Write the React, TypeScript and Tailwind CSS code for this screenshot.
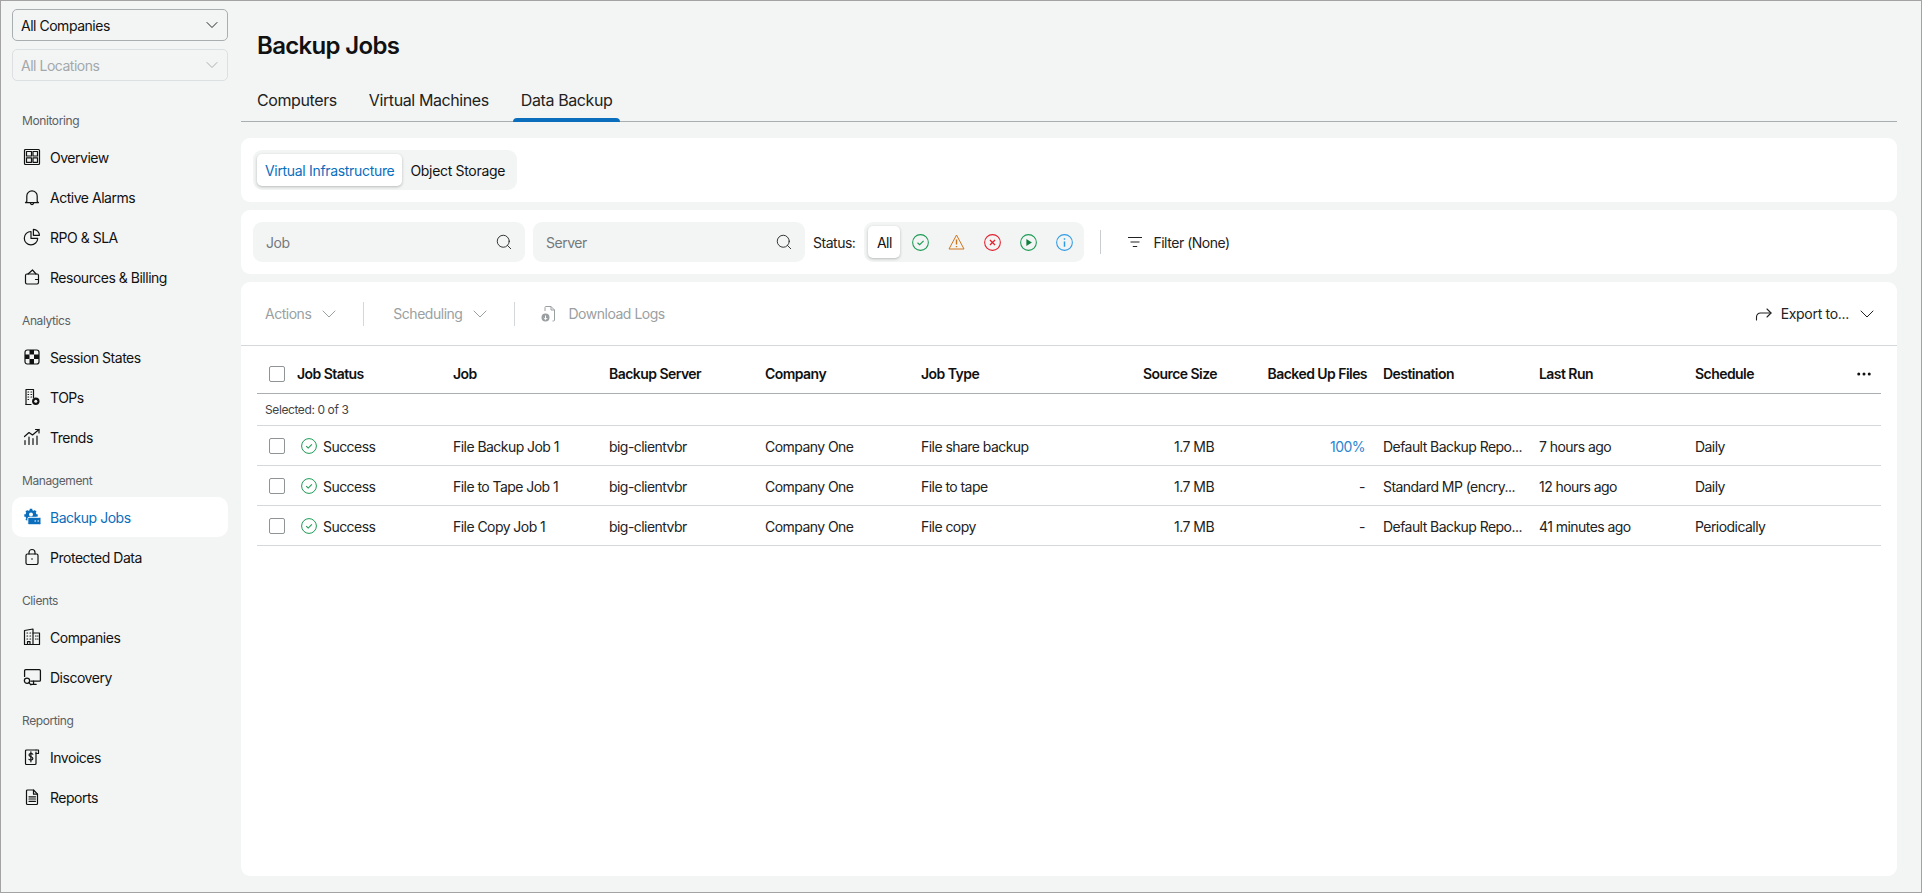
import { ChevronDown, Search, Ellipsis } from "lucide-react";
import type { ReactNode } from "react";

// shared props for the hand drawn line icons
const line = { fill: "none", stroke: "currentColor", strokeWidth: 1.2, strokeLinecap: "round", strokeLinejoin: "round" } as const;

function Icon({ children, size = 18, className = "" }: { children: ReactNode; size?: number; className?: string }) {
  return (
    <svg width={size} height={size} viewBox="0 0 18 18" className={"shrink-0 " + className} {...line}>
      {children}
    </svg>
  );
}

const icons: Record<string, ReactNode> = {
  overview: (
    <Icon>
      <rect x="1.500" y="1.500" width="15" height="15" rx="1" />
      <rect x="3.500" y="3.500" width="5" height="4.500" />
      <rect x="10" y="3.500" width="4.500" height="4.500" />
      <rect x="3.500" y="9.800" width="5" height="4.500" />
      <rect x="10" y="9.800" width="4.500" height="4.500" />
    </Icon>
  ),
  bell: (
    <Icon>
      <path d="M3.800 13.500V8a5.200 5.200 0 0 1 10.400 0v5.500l1.300 1.200h-13z" />
      <path d="M7.500 15.500a1.600 1.600 0 0 0 3 0" />
    </Icon>
  ),
  pie: (
    <Icon>
      <path d="M8 3.500a6.700 6.700 0 1 0 6.700 6.900H8z" />
      <path d="M10.400 1.300a6 6 0 0 1 6 6h-6z" />
    </Icon>
  ),
  wallet: (
    <Icon>
      <rect x="2.500" y="6" width="13" height="10" rx="1.400" />
      <path d="M5 6l4.500-4 3.500 4" />
      <path d="M15.500 11.500h-3" />
    </Icon>
  ),
  session: (
    <Icon>
      <rect x="2" y="2" width="14" height="14" rx="2.200" />
      <path d="M6.500 2H11v4.500H6.500zM2 6.500h4.500V11H2zM11 6.500h5V11h-5zM6.500 11H11v5H6.500z" fill="currentColor" stroke="none" />
    </Icon>
  ),
  tops: (
    <Icon>
      <path d="M3 16.500V1.500h7.500v8" />
      <path d="M3 16.500h5" />
      <path d="M5 4h.6M8 4h.6M5 6.500h.6M8 6.500h.6M5 9h.6M8 9h.6M5 11.500h.6" />
      <circle cx="12.800" cy="13.300" r="3.700" fill="currentColor" stroke="none" />
      <circle cx="12.800" cy="13.300" r="1.500" fill="#f3f5f5" stroke="none" />
    </Icon>
  ),
  trends: (
    <Icon>
      <path d="M1.500 8.500L6 4.500l3.500 2.500L16 1.500" />
      <path d="M12.500 1.500H16V5" />
      <path d="M2 16.500v-4M6 16.500V9M10 16.500v-6M14 16.500V8" />
    </Icon>
  ),
  backup: (
    <svg width="18" height="18" viewBox="0 0 18 18" className="shrink-0" fill="currentColor">
      <circle cx="8" cy="7.500" r="5.500" />
      <path d="M8 .8v13.400M1.300 7.500h13.400M3.300 2.800l9.400 9.400M12.700 2.800l-9.400 9.400" stroke="currentColor" strokeWidth="2.600" />
      <circle cx="8" cy="6.500" r="2" fill="#fff" />
      <rect x="4.800" y="9.300" width="13.200" height="7.500" rx="1.200" stroke="#fff" strokeWidth="1" />
      <path d="M11.500 13h1.500M14.500 13H16" stroke="#fff" strokeWidth="1.200" />
    </svg>
  ),
  lock: (
    <Icon>
      <rect x="3" y="6" width="12" height="10.500" rx="1.400" />
      <path d="M6 6V4.500a3 3 0 0 1 6 0V6" />
      <circle cx="9" cy="11" r=".8" fill="currentColor" stroke="none" />
    </Icon>
  ),
  companies: (
    <Icon>
      <path d="M1.500 16.500V2.500L10 1v15.500z" />
      <path d="M10 5h6.500v11.500H10" />
      <path d="M4 5h.6M7 5h.6M4 8h.6M7 8h.6M4 11h.6M7 11h.6M12.500 8h.6M15 8h-.4M12.500 11h.6M15 11h-.4" />
      <path d="M4.500 16.500v-2.800H7v2.800" />
    </Icon>
  ),
  discovery: (
    <Icon size={19}>
      <path d="M1.500 8V2.500a1 1 0 0 1 1-1h13a1 1 0 0 1 1 1v9a1 1 0 0 1-1 1H7.500" />
      <path d="M10 12.500v3M7.500 15.500h5" />
      <circle cx="3.800" cy="12" r="2.500" />
      <path d="M5.600 13.800L7.500 16" />
    </Icon>
  ),
  invoices: (
    <Icon>
      <path d="M13 4v11.500a1 1 0 0 1-1 1H3.500a1 1 0 0 1-1-1V3a1 1 0 0 1 1-1H13" />
      <path d="M13 2h2.500v3.500H13" />
      <path d="M9.800 6.200C9.300 5.400 6 5.200 6 7c0 2 3.900 1.400 3.900 3.500 0 1.900-3.400 1.800-4 .8" />
      <path d="M7.900 3.800v10" />
    </Icon>
  ),
  reports: (
    <Icon>
      <path d="M3.500 3a1 1 0 0 1 1-1h6l4 4.200v9.300a1 1 0 0 1-1 1h-9a1 1 0 0 1-1-1z" />
      <path d="M10.500 2v4.200h4" />
      <path d="M6 8.800h6.500M6 11h6.500M6 13.300h6.500" />
    </Icon>
  ),
};

const nav = [
  { title: "Monitoring", items: [["overview", "Overview"], ["bell", "Active Alarms"], ["pie", "RPO & SLA"], ["wallet", "Resources & Billing"]] },
  { title: "Analytics", items: [["session", "Session States"], ["tops", "TOPs"], ["trends", "Trends"]] },
  { title: "Management", items: [["backup", "Backup Jobs"], ["lock", "Protected Data"]] },
  { title: "Clients", items: [["companies", "Companies"], ["discovery", "Discovery"]] },
  { title: "Reporting", items: [["invoices", "Invoices"], ["reports", "Reports"]] },
];

function Sidebar() {
  return (
    <aside className="w-[240px] shrink-0 pl-[11px]">
      <button className="mt-[8px] flex h-8 w-[216px] items-center justify-between rounded-[5px] border border-[#a9aeb1] pr-[5px] pl-2 text-[14px] text-[#111]">
        All Companies
        <ChevronDown size={20} strokeWidth={1.1} />
      </button>
      <button className="mt-[8px] flex h-8 w-[216px] items-center justify-between rounded-[5px] border border-[#dde0e1] pr-[5px] pl-2 text-[14px] text-[#a3a8ab]">
        All Locations
        <ChevronDown size={20} strokeWidth={1.1} />
      </button>
      <nav className="mt-[24px] w-[216px]">
        {nav.map((group, i) => (
          <div key={group.title} className={i > 0 ? "mt-2" : ""}>
            <div className="flex h-8 items-center pl-[10px] text-[12px] tracking-[-0.4px] text-[#5a6063]">{group.title}</div>
            {group.items.map(([icon, label]) => {
              const active = label === "Backup Jobs";
              return (
                <div
                  key={label}
                  className={
                    "flex h-10 items-center gap-[8px] rounded-[10px] pl-[10px] text-[14px] " +
                    (active ? "bg-white text-[#0a6ebd]" : "text-[#111]")
                  }
                >
                  <span className="flex w-[20px] justify-center">{icons[icon]}</span>
                  {label}
                </div>
              );
            })}
          </div>
        ))}
      </nav>
    </aside>
  );
}

function StatusCheck({ size = 16 }: { size?: number }) {
  return (
    <svg width={size} height={size} viewBox="0 0 16 16" className="shrink-0 text-[#1c9a54]" fill="none" stroke="currentColor" strokeWidth="1">
      <circle cx="8" cy="8" r="7.400" />
      <path d="M5.200 8.200l2 1.900 3.700-3.700" strokeWidth="1.100" />
    </svg>
  );
}

function StatusFilter() {
  return (
    <div className="flex h-10 items-center rounded-[9px] bg-[#f3f5f5] pr-[2px] pl-1">
      <span className="mr-[2px] flex h-8 w-8 items-center justify-center rounded-[5px] bg-white text-[14px] text-[#111] shadow-[0_1px_3px_rgba(0,0,0,0.25)]">All</span>
      <span className="flex h-8 w-9 items-center justify-center"><StatusCheck size={17} /></span>
      <span className="flex h-8 w-9 items-center justify-center">
        <svg width="17" height="16" viewBox="0 0 17 16" fill="none" stroke="#d0741c" strokeWidth="1">
          <path d="M8.500 1L16 15H1z" strokeLinejoin="round" />
          <path d="M8.500 5.500v5M8.500 12v1.200" strokeWidth="1.400" />
        </svg>
      </span>
      <span className="flex h-8 w-9 items-center justify-center">
        <svg width="17" height="17" viewBox="0 0 16 16" fill="none" stroke="#e3202e" strokeWidth="1">
          <circle cx="8" cy="8" r="7.400" />
          <path d="M5.600 5.600l4.800 4.800M10.400 5.600l-4.800 4.800" strokeWidth="1.200" />
        </svg>
      </span>
      <span className="flex h-8 w-9 items-center justify-center">
        <svg width="17" height="17" viewBox="0 0 16 16" fill="none" stroke="#1c9a54" strokeWidth="1">
          <circle cx="8" cy="8" r="7.400" />
          <path d="M6 4.800L11.200 8 6 11.200z" fill="#0f7f3f" stroke="none" />
        </svg>
      </span>
      <span className="flex h-8 w-9 items-center justify-center">
        <svg width="17" height="17" viewBox="0 0 16 16" fill="none" stroke="#2f9be6" strokeWidth="1">
          <circle cx="8" cy="8" r="7.400" />
          <path d="M8 7v5" strokeWidth="1.400" />
          <path d="M8 4v1.400" strokeWidth="1.400" />
        </svg>
      </span>
    </div>
  );
}

function SearchBox({ label }: { label: string }) {
  return (
    <div className="flex h-10 w-[272px] items-center justify-between rounded-[9px] bg-[#f3f5f5] pr-[12px] pl-[13px] text-[14px] text-[#74797c]">
      {label}
      <Search size={18} strokeWidth={1.2} className="text-[#222]" />
    </div>
  );
}

const cols = "grid grid-cols-[184px_156px_156px_156px_156px_156px_150px_156px_156px_156px_42px]";

const rows = [
  ["File Backup Job 1", "File share backup", "100%", "Default Backup Repo...", "7 hours ago", "Daily"],
  ["File to Tape Job 1", "File to tape", "-", "Standard MP (encry...", "12 hours ago", "Daily"],
  ["File Copy Job 1", "File copy", "-", "Default Backup Repo...", "41 minutes ago", "Periodically"],
];

function Checkbox() {
  return <span className="h-4 w-4 shrink-0 rounded-[2px] border border-[#8f9497] bg-white" />;
}

function JobsTable() {
  return (
    <div className="mx-4 text-[14px] text-[#222]">
      <div className={cols + " h-[48px] items-center border-b border-[#a9aeb1] pt-2 font-semibold tracking-[-0.55px] text-[#111]"}>
        <div className="flex items-center gap-[12px] pl-3">
          <Checkbox />
          Job Status
        </div>
        <div className="pl-3">Job</div>
        <div className="pl-3">Backup Server</div>
        <div className="pl-3">Company</div>
        <div className="pl-3">Job Type</div>
        <div className="pr-1 text-right">Source Size</div>
        <div className="pr-1 text-right">Backed Up Files</div>
        <div className="pl-3">Destination</div>
        <div className="pl-3">Last Run</div>
        <div className="pl-3">Schedule</div>
        <div className="flex justify-end pr-[8px]"><Ellipsis size={18} strokeWidth={2} /></div>
      </div>
      <div className="flex h-8 items-center border-b border-[#d5d8da] pl-2 text-[12px] tracking-[-0.4px] text-[#444]">Selected: 0 of 3</div>
      {rows.map(([job, type, files, dest, last, sched]) => (
        <div key={job} className={cols + " h-10 items-center border-b border-[#d5d8da] pt-px tracking-[-0.55px] whitespace-nowrap"}>
          <div className="flex items-center pl-3">
            <Checkbox />
            <span className="mr-[6px] ml-[16px]"><StatusCheck /></span>
            Success
          </div>
          <div className="pl-3">{job}</div>
          <div className="pl-3">big-clientvbr</div>
          <div className="pl-3">Company One</div>
          <div className="pl-3">{type}</div>
          <div className="pr-[7px] text-right">1.7 MB</div>
          <div className={"pr-[6px] text-right " + (files === "100%" ? "text-[#2a85cf]" : "")}>{files}</div>
          <div className="pl-3">{dest}</div>
          <div className="pl-3">{last}</div>
          <div className="pl-3">{sched}</div>
          <div />
        </div>
      ))}
    </div>
  );
}

export default function App() {
  return (
    <div
      className="flex h-[893px] w-[1922px] overflow-hidden border border-[#a3a3a3] bg-[#f3f5f5] tracking-[-0.48px]"
      style={{ fontFamily: "Inter, 'Noto Sans', sans-serif" }}
    >
      <Sidebar />
      <main className="flex min-w-0 flex-1 flex-col pr-[24px]">
        <h1 className="mt-[29px] pl-4 text-[24px] leading-[32px] font-semibold tracking-[-0.67px] text-[#111]">Backup Jobs</h1>
        <div className="mt-[15px] flex h-[45px] items-end gap-4 border-b border-[#a9aeb1] pl-2 text-[16px] tracking-[-0.4px] text-[#222]">
          <div className="flex h-full items-center px-2 pt-[2px]">Computers</div>
          <div className="flex h-full items-center px-2 pt-[2px]">Virtual Machines</div>
          <div className="relative flex h-full items-center px-2 pt-[2px]">
            Data Backup
            <span className="absolute right-0 -bottom-px left-0 h-1 rounded-t-[4px] bg-[#0a6ebd]" />
          </div>
        </div>
        <section className="mt-4 flex h-[64px] items-center rounded-[9px] bg-white pl-3">
          <div className="flex h-10 items-center rounded-[9px] bg-[#f3f5f5] px-1 text-[14px] tracking-[-0.32px]">
            <span className="flex h-8 items-center rounded-[5px] bg-white px-2 text-[#0a6ebd] shadow-[0_1px_3px_rgba(0,0,0,0.25)]">Virtual Infrastructure</span>
            <span className="flex h-8 items-center px-2 text-[#111]">Object Storage</span>
          </div>
        </section>
        <section className="mt-2 flex h-[64px] items-center rounded-[9px] bg-white pl-3 text-[14px] text-[#222]">
          <SearchBox label="Job" />
          <div className="w-2" />
          <SearchBox label="Server" />
          <span className="mr-[9px] ml-2">Status:</span>
          <StatusFilter />
          <span className="mx-4 h-6 w-px bg-[#c9cdcf]" />
          <svg width="16" height="12" viewBox="0 0 16 12" className="mr-[10px] ml-[10px] shrink-0" fill="none" stroke="#222" strokeWidth="1.100">
            <path d="M1 1.500h14M3.500 6h9M5.800 10.500h4.400" />
          </svg>
          Filter (None)
        </section>
        <section className="mt-2 h-[594px] rounded-[9px] bg-white">
          <div className="flex h-[64px] items-center border-b border-[#d5d8da] pr-[18px] pl-6 text-[14px] text-[#9a9fa2]">
            Actions
            <ChevronDown size={24} strokeWidth={1} className="ml-[6px]" />
            <span className="mr-[29px] ml-[22px] h-6 w-px bg-[#d5d8da]" />
            Scheduling
            <ChevronDown size={24} strokeWidth={1} className="ml-[6px]" />
            <span className="ml-[22px] h-6 w-px bg-[#d5d8da]" />
            <svg width="18" height="18" viewBox="0 0 18 18" className="mr-[10px] ml-[25px] shrink-0" fill="none" stroke="currentColor" strokeWidth="1">
              <path d="M5 6V2.500a1 1 0 0 1 1-1h5l3.500 3.500v10a1 1 0 0 1-1 1h-1" />
              <path d="M11 1.500V5h3.500" />
              <circle cx="5.500" cy="12.500" r="4" fill="currentColor" stroke="none" />
              <path d="M5.500 10.500v4M3.800 13l1.700 1.700L7.200 13" stroke="#fff" />
            </svg>
            Download Logs
            <div className="ml-auto flex items-center text-[14px] tracking-[-0.3px] text-[#222]">
              <svg width="18" height="16" viewBox="0 0 18 16" className="mr-[8px] shrink-0" fill="none" stroke="currentColor" strokeWidth="1.100" strokeLinecap="round" strokeLinejoin="round">
                <path d="M1.500 14V11a4 4 0 0 1 4-4H16" />
                <path d="M12 3l4 4-4 4" />
              </svg>
              Export to...
              <ChevronDown size={24} strokeWidth={1} className="ml-[6px]" />
            </div>
          </div>
          <JobsTable />
        </section>
      </main>
    </div>
  );
}
